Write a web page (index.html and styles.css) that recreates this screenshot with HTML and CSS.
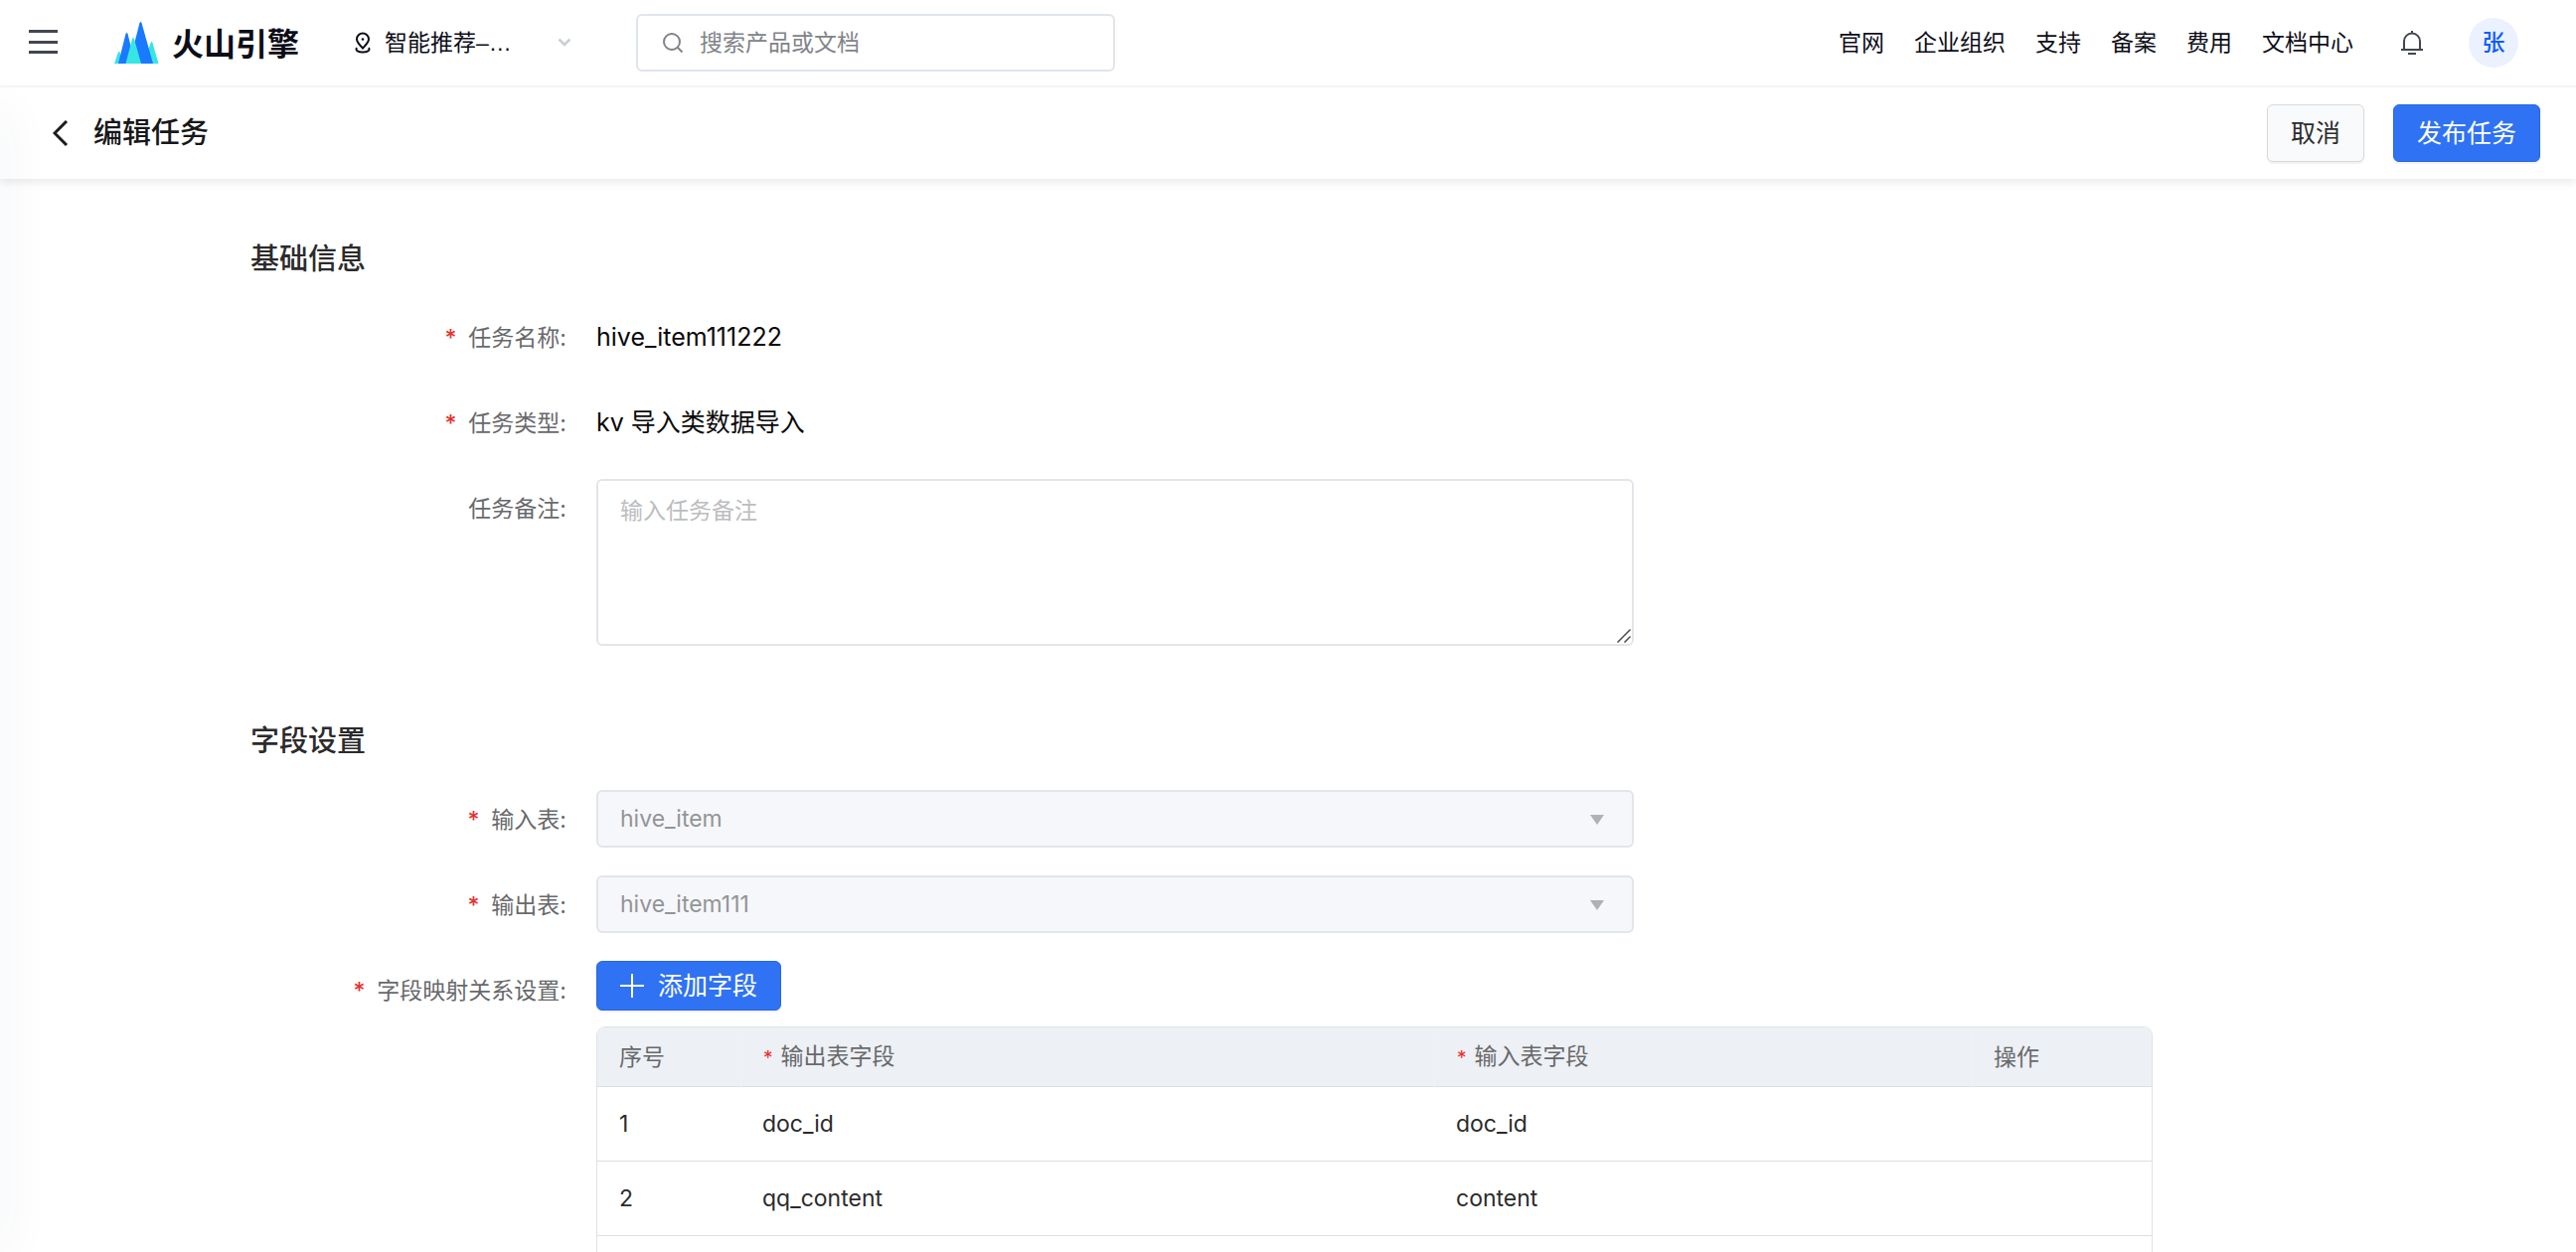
FILE: index.html
```html
<!DOCTYPE html>
<html lang="zh-CN">
<head>
<meta charset="utf-8">
<meta name="viewport" content="width=device-width, initial-scale=1">
<title>编辑任务</title>
<link rel="stylesheet" href="styles.css">
</head>
<body>
<div class="app">
  <header class="topbar">
    <button class="icon-btn" type="button" aria-label="菜单">
      <svg width="30" height="26" viewBox="0 0 30 26" fill="#42464f"><path d="M0 0h29v3H0zM0 11h29v3H0zM0 21h29v3H0z"/></svg>
    </button>
    <a class="brand" href="#">
      <svg width="45" height="42" viewBox="0 0 45 42">
        <path fill="#37e5e2" d="M0 42L4 30.500q.8-1.500 1.600 0L9 42zM30 42l6.500-21q1-2 2 0L44.500 42z"/>
        <path fill="#1979ff" d="M4 42l7.500-30q1-2 2 0L21 42zM15 42L25.500 1q1-2 2 0L39 42z"/>
        <path fill="#37e5e2" d="M11.500 42L18 17q1-2.200 2 0l7 25z"/>
      </svg>
      <span class="brand-name">火山引擎</span>
    </a>
    <button class="project" type="button">
      <svg width="16" height="22" viewBox="0 0 16 22" fill="none" stroke="#0c0d18" stroke-width="2"><path d="M8 16.500C4 12.500 2 10.500 2 7.500a6 6 0 0 1 12 0c0 3-2 5-6 9z"/><path d="M2 16c-2 3 2 4.500 6 4.500s8-1.500 6-4.500"/><circle cx="8" cy="7.500" r="1.300" fill="#0c0d18" stroke="none"/></svg>
      <span class="project-name">智能推荐–…</span>
      <svg width="14" height="10" viewBox="0 0 14 10" fill="none" stroke="#c9ced6" stroke-width="2.500"><path d="M1.500 1.500L7 7l5.500-5.500"/></svg>
    </button>
    <label class="search">
      <svg width="22" height="22" viewBox="0 0 22 22" fill="none" stroke="#80838a" stroke-width="2"><circle cx="10" cy="10" r="8"/><path d="M15.500 15.500L20.500 20.500"/></svg>
      <input type="text" placeholder="搜索产品或文档" aria-label="搜索产品或文档">
    </label>
    <nav class="links">
      <a href="#">官网</a>
      <a href="#">企业组织</a>
      <a href="#">支持</a>
      <a href="#">备案</a>
      <a href="#">费用</a>
      <a href="#">文档中心</a>
    </nav>
    <button class="icon-btn bell" type="button" aria-label="消息">
      <svg width="24" height="26" viewBox="0 0 24 26" fill="none" stroke="#42464f" stroke-width="2"><path d="M4 20v-8.500a8 8 0 0 1 16 0V20M12 1v3M1 20h22M8 24h8"/></svg>
    </button>
    <a class="avatar" href="#">张</a>
  </header>

  <div class="pagebar">
    <button class="icon-btn" type="button" aria-label="返回">
      <svg width="16" height="26" viewBox="0 0 16 26" fill="none" stroke="#1c1c1e" stroke-width="3"><path d="M14 1L2 13l12 12"/></svg>
    </button>
    <h1 class="page-title">编辑任务</h1>
    <button class="btn btn-plain" type="button">取消</button>
    <button class="btn btn-primary btn-publish" type="button">发布任务</button>
  </div>

  <main class="content">
    <form class="form">
      <section>
        <h2 class="section-title">基础信息</h2>
        <div class="fields">
          <div class="row">
            <span class="label required">任务名称:</span>
            <div class="value">hive_item111222</div>
          </div>
          <div class="row">
            <span class="label required">任务类型:</span>
            <div class="value">kv 导入类数据导入</div>
          </div>
          <div class="row">
            <label class="label" for="remark">任务备注:</label>
            <div class="control">
              <textarea id="remark" class="textarea" placeholder="输入任务备注"></textarea>
              <svg class="grip" width="14" height="14" viewBox="0 0 14 14" stroke="#4c4c4c" stroke-width="1.500"><path d="M.5 13.500l13-13M7.500 13.500l6-6"/></svg>
            </div>
          </div>
        </div>
      </section>

      <section>
        <h2 class="section-title">字段设置</h2>
        <div class="fields">
          <div class="row">
            <label class="label required" for="input-table">输入表:</label>
            <div class="control">
              <select id="input-table" class="select" disabled><option>hive_item</option></select>
              <svg class="arrow" width="14" height="10" viewBox="0 0 14 10" fill="#b0b1b4"><path d="M0 0h14L7 10z"/></svg>
            </div>
          </div>
          <div class="row">
            <label class="label required" for="output-table">输出表:</label>
            <div class="control">
              <select id="output-table" class="select" disabled><option>hive_item111</option></select>
              <svg class="arrow" width="14" height="10" viewBox="0 0 14 10" fill="#b0b1b4"><path d="M0 0h14L7 10z"/></svg>
            </div>
          </div>
          <div class="row">
            <span class="label required">字段映射关系设置:</span>
            <div class="mapping">
              <button class="btn btn-primary btn-add" type="button">
                <svg width="24" height="24" viewBox="0 0 24 24" stroke="#fff" stroke-width="2"><path d="M12 0v24M0 12h24"/></svg>
                添加字段
              </button>
              <div class="table-wrap">
                <table class="table">
                  <colgroup><col class="col-no"><col><col class="col-in"><col class="col-op"></colgroup>
                  <thead>
                    <tr><th>序号</th><th><span class="star">*</span>输出表字段</th><th><span class="star">*</span>输入表字段</th><th>操作</th></tr>
                  </thead>
                  <tbody>
                    <tr><td>1</td><td>doc_id</td><td>doc_id</td><td></td></tr>
                    <tr><td>2</td><td>qq_content</td><td>content</td><td></td></tr>
                    <tr><td></td><td></td><td></td><td></td></tr>
                  </tbody>
                </table>
              </div>
            </div>
          </div>
        </div>
      </section>
    </form>
  </main>
  <div class="edge-shadow"></div>
</div>
</body>
</html>
```
FILE: styles.css
```css
* { box-sizing: border-box; }

body {
  margin: 0;
  color: #0c0d18;
  background: #fff;
  font: 23px/36px Inter, "Noto Sans CJK SC", sans-serif;
}

button, input, select, textarea { font: inherit; color: inherit; }
a { color: inherit; text-decoration: none; }
svg { display: block; flex: none; }

.app {
  position: relative;
  display: flex;
  flex-direction: column;
  height: 100vh;
  overflow: hidden;
}

/* Top navigation */
.topbar {
  display: flex;
  align-items: center;
  flex: none;
  height: 88px;
  padding: 0 58px 0 29px;
  border-bottom: 2px solid #f7f8f9;
}

.icon-btn {
  padding: 0;
  border: 0;
  background: none;
  cursor: pointer;
}

.brand {
  display: flex;
  align-items: center;
  gap: 13px;
  margin-left: 56px;
}

.brand-name {
  padding-top: 4px;
  font-size: 32px;
  font-weight: 700;
  line-height: 40px;
}

.project {
  display: flex;
  align-items: center;
  width: 218px;
  margin-left: 56px;
  padding: 0;
  border: 0;
  background: none;
  text-align: left;
}

.project-name {
  flex: 1;
  margin-left: 14px;
  font-family: "Liberation Sans", "Noto Sans CJK SC", sans-serif;
  white-space: nowrap;
}

.search {
  display: flex;
  align-items: center;
  gap: 16px;
  width: 482px;
  height: 58px;
  margin-left: 65px;
  padding: 0 24px;
  border: 2px solid #e0e5ec;
  border-radius: 6px;
}

.search input {
  flex: 1;
  min-width: 0;
  padding: 0;
  border: 0;
  outline: 0;
  background: none;
}

.search input::placeholder { color: #80838a; }

.links {
  display: flex;
  gap: 30px;
  margin-left: auto;
}

.bell { margin-left: 47px; }

.avatar {
  display: grid;
  place-items: center;
  width: 50px;
  height: 50px;
  margin-left: 45px;
  border-radius: 50%;
  color: #0b5cff;
  background: #ebf1ff;
  font-weight: 500;
}

/* Page heading with actions */
.pagebar {
  display: flex;
  align-items: center;
  flex: none;
  height: 92px;
  padding: 0 36px 0 53px;
  box-shadow: 0 3px 9px rgba(0, 0, 0, .09);
}

.page-title {
  flex: 1;
  margin: 0 0 0 25px;
  color: #17181a;
  font-size: 29px;
  font-weight: 500;
  line-height: 40px;
}

.btn {
  height: 58px;
  padding: 0 23px;
  border: 1px solid #d8d9db;
  border-radius: 6px;
  font-size: 25px;
  font-weight: 400;
  box-shadow: 0 2px 2px rgba(0, 0, 0, .06);
  cursor: pointer;
}

.btn-plain { color: #2c2d2f; background: #f9fafc; }

.btn-primary {
  border-color: #2b66dd;
  color: #fff;
  background: #2f72f3;
}

.btn-publish { margin-left: 29px; }

/* Form */
.content {
  flex: 1;
  min-height: 0;
  overflow: auto;
  scrollbar-width: none;
  padding: 61px 252px;
}

.form {
  display: flex;
  flex-direction: column;
  gap: 76px;
}

.section-title {
  margin: 0 0 29px;
  color: #2b2b2c;
  font-size: 29px;
  font-weight: 500;
  line-height: 40px;
}

.fields {
  display: flex;
  flex-direction: column;
  gap: 28px;
}

.row {
  display: grid;
  grid-template-columns: repeat(24, minmax(0, 1fr));
}

.label {
  grid-column: 1 / span 4;
  padding-right: 30px;
  color: #68696b;
  line-height: 60px;
  text-align: right;
  height: 58px;
}

.required::before {
  content: "*";
  margin-right: 12px;
  color: #e5302d;
  font-weight: 500;
}

.value {
  grid-column: 5 / span 18;
  color: #0a0a0a;
  font-size: 25px;
  line-height: 58px;
}

.control {
  position: relative;
  grid-column: 5 / span 12;
}

.mapping { grid-column: 5 / span 18; }

.textarea, .select {
  display: block;
  width: 100%;
  border: 2px solid #e2e5ea;
  border-radius: 6px;
}

.textarea {
  height: 168px;
  padding: 12px 22px;
  outline: 0;
  resize: none;
  background: #fff;
}

.textarea::placeholder { color: #bcbdbf; }

.grip {
  position: absolute;
  right: 3px;
  bottom: 3px;
}

.select {
  appearance: none;
  height: 58px;
  padding: 0 22px;
  color: #939497;
  background: #f6f7fa;
  opacity: 1;
}

.arrow {
  position: absolute;
  top: 25px;
  right: 30px;
}

.btn-add {
  display: flex;
  align-items: center;
  gap: 14px;
  height: 50px;
  margin: 0 0 16px;
  padding: 0 23px;
}

/* Mapping table */
.table-wrap {
  overflow: hidden;
  border: 1px solid #dfe2e6;
  border-radius: 9px;
}

.table {
  width: 100%;
  table-layout: fixed;
  border-collapse: separate;
  border-spacing: 0;
  color: #2b2b2c;
}

.col-no { width: 144px; }
.col-in { width: 540px; }
.col-op { width: 182px; }

.table th, .table td {
  padding: 0 22px;
  border-bottom: 1px solid #dadfe5;
  text-align: left;
}

.table th {
  height: 60px;
  color: #68696b;
  background: #edf0f5;
  font-weight: 400;
}

.table th + th { border-left: 1px solid #f0f2f7; }
.table td { height: 75px; }

.star {
  margin-right: 8px;
  color: #f0262b;
  font-size: 19px;
}

/* Soft shadow cast by the collapsed side menu */
.edge-shadow {
  position: absolute;
  top: 110px;
  bottom: 0;
  left: -10px;
  width: 10px;
  box-shadow: 0 0 48px rgba(40, 60, 100, .14);
  pointer-events: none;
}
```
